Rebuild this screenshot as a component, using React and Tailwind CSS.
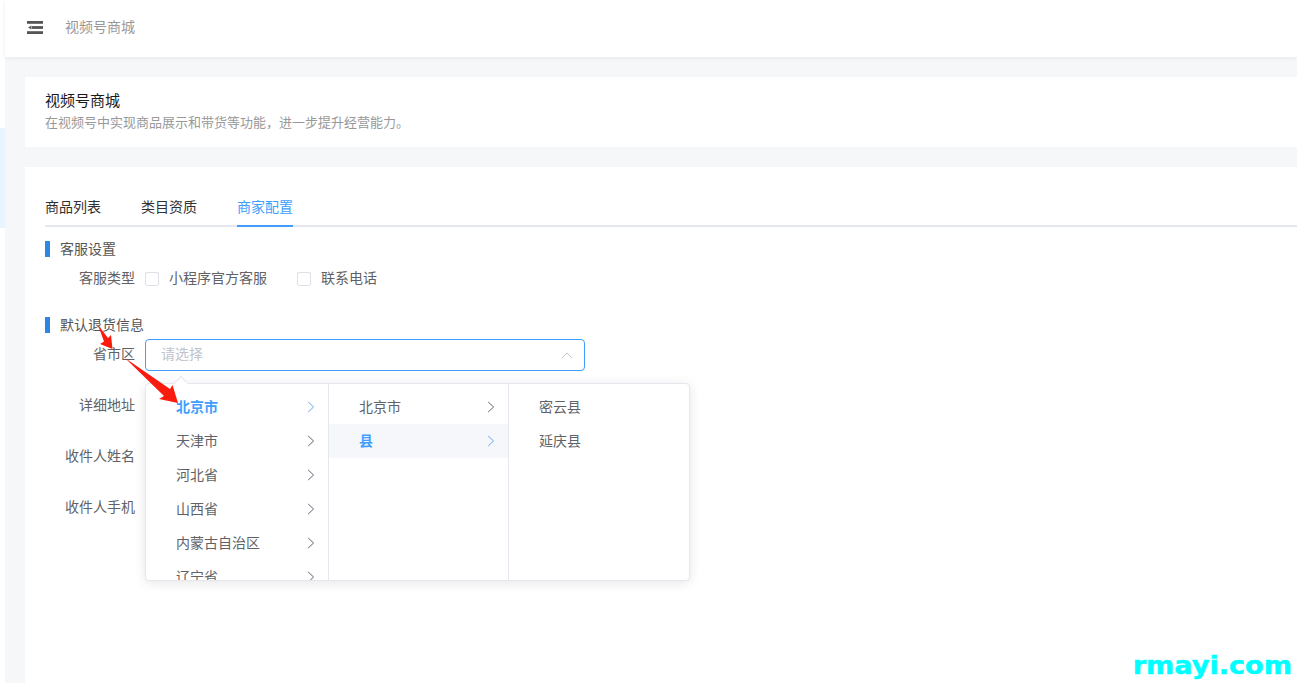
import React from 'react';

function Chevron({ className }) {
  return (
    <svg className={className} width="8" height="12" viewBox="0 0 8 12" fill="none" stroke="currentColor" strokeWidth="1">
      <path d="M1.2 1 L6.6 6 L1.2 11" />
    </svg>
  );
}

function Item({ label, active, hover, noChevron }) {
  return (
    <div className={`flex h-[34px] shrink-0 items-center justify-between pl-[30px] pr-[13px] text-[14px] ${hover ? 'bg-[#f5f7fa]' : ''} ${active ? 'font-bold text-[#409eff]' : 'text-[#606266]'}`}>
      <span className="pb-[2px]">{label}</span>
      {!noChevron && <Chevron className={active ? 'text-[#6ba6f2]' : 'text-[#5f6574]'} />}
    </div>
  );
}

function SectionTitle({ children, className }) {
  return (
    <div className={`flex h-4 items-center ${className}`}>
      <div className="h-4 w-[5px] bg-[#2b87e3]" />
      <span className="ml-[10px] pb-[2px] text-[14px] leading-4 text-[#555]">{children}</span>
    </div>
  );
}

function Label({ children, className = '' }) {
  return <div className={`w-[90px] text-right text-[14px] text-[#606266] ${className}`}>{children}</div>;
}

function Check({ label, className = '' }) {
  return (
    <div className={`flex items-center ${className}`}>
      <span className="h-[14px] w-[14px] rounded-[2px] border border-[#dcdfe6] bg-white" />
      <span className="ml-[10px] pb-[4px] text-[14px] text-[#606266]">{label}</span>
    </div>
  );
}

export default function App() {
  const col1 = ['北京市', '天津市', '河北省', '山西省', '内蒙古自治区', '辽宁省'];
  return (
    <div className="relative flex h-[683px] w-full overflow-hidden bg-white font-['Noto_Sans_CJK_SC','Microsoft_YaHei',sans-serif]">
      <aside className="flex w-[5px] shrink-0 flex-col bg-white pt-[128px]">
        <div className="h-[100px] bg-[#e8f4ff]" />
      </aside>

      <div className="flex min-w-0 flex-1 flex-col bg-[#f6f7f9]">
        <header className="z-10 flex h-[57px] shrink-0 items-center bg-white pb-[3px] pl-[22px] shadow-[0_1px_4px_rgba(0,21,41,0.08)]">
          <svg width="16" height="13" viewBox="0 0 16 13" fill="#555">
            <rect x="0" y="0" width="16" height="2.8" />
            <rect x="5" y="5.1" width="11" height="2.8" />
            <path d="M1 6.5 L4.5 4.4 V8.6 Z" />
            <rect x="0" y="10.2" width="16" height="2.8" />
          </svg>
          <span className="ml-[22px] pb-px text-[14px] text-[#999]">视频号商城</span>
        </header>

        <div className="flex min-h-0 flex-1 flex-col gap-5 pl-5 pt-5">
          <section className="flex h-[70px] shrink-0 flex-col bg-white pl-5 pt-[13px]">
            <div className="text-[15px] leading-5 text-[#1a1a1a]">视频号商城</div>
            <div className="mt-[2px] text-[13px] leading-5 text-[#999]">在视频号中实现商品展示和带货等功能，进一步提升经营能力。</div>
          </section>

          <section className="relative flex-1 bg-white pl-5">
            <nav className="mt-[20px] flex h-[40px] gap-10 border-b-2 border-[#e4e7ed]">
              <div className="h-[40px] pt-[9px] text-[14px] leading-5 text-[#303133]">商品列表</div>
              <div className="h-[40px] pt-[9px] text-[14px] leading-5 text-[#303133]">类目资质</div>
              <div className="h-[40px] border-b-2 border-[#409eff] pt-[9px] text-[14px] leading-5 text-[#409eff]">商家配置</div>
            </nav>

            <SectionTitle className="mt-[14px]">客服设置</SectionTitle>
            <div className="mt-[14px] flex h-[16px] items-center">
              <Label className="pb-[4px]">客服类型</Label>
              <Check label="小程序官方客服" className="ml-[10px]" />
              <Check label="联系电话" className="ml-[30px]" />
            </div>

            <SectionTitle className="mt-[30px]">默认退货信息</SectionTitle>
            <div className="mt-[6px] flex h-8 items-center">
              <Label className="pb-[4px]">省市区</Label>
              <div className="ml-[10px] flex h-8 w-[440px] items-center justify-between rounded-[4px] border border-[#409eff] pl-[15px] pr-[11px]">
                <span className="pb-[4px] text-[14px] text-[#c0c4cc]">请选择</span>
                <svg width="12" height="7" viewBox="0 0 12 7" fill="none" stroke="#c0c4cc" strokeWidth="1"><path d="M1 6 L6 1 L11 6" /></svg>
              </div>
            </div>
            <Label className="mt-[23px] leading-5">详细地址</Label>
            <Label className="mt-[31px] leading-5">收件人姓名</Label>
            <Label className="mt-[31px] leading-5">收件人手机</Label>

            {/* cascader popup */}
            <div className="absolute left-[120px] top-[216px] z-20 flex h-[198px] w-[545px] rounded-[4px] border border-[#e4e7ed] bg-white shadow-[0_2px_12px_rgba(0,0,0,0.1)]">
              <div className="absolute -top-[6px] left-[30px] h-[10px] w-[10px] rotate-45 border-l border-t border-[#e4e7ed] bg-white" />
              <div className="relative flex w-[183px] flex-col overflow-hidden border-r border-[#e4e7ed] pt-[6px]">
                {col1.map((c, i) => <Item key={c} label={c} active={i === 0} />)}
              </div>
              <div className="relative flex w-[180px] flex-col border-r border-[#e4e7ed] pt-[6px]">
                <Item label="北京市" />
                <Item label="县" active hover />
              </div>
              <div className="relative flex flex-1 flex-col pt-[6px]">
                <Item label="密云县" noChevron />
                <Item label="延庆县" noChevron />
              </div>
            </div>
          </section>
        </div>
      </div>

      {/* red annotation arrows */}
      <svg className="absolute left-0 top-0 z-30" width="300" height="430" viewBox="0 0 300 430" fill="#fb1a0e">
        <path d="M98 325 L108 338 L111 335 L112.5 349 L100 344 L104 341.5 Z" />
        <path d="M125 358 L170 389 L172.5 385 L178 403 L159 399 L164 396 Z" />
      </svg>

      {/* watermark */}
      <div className="absolute bottom-[5px] right-[5px] z-30 origin-right scale-x-[1.13] font-['DejaVu_Sans',sans-serif] text-[24px] font-bold leading-6 text-[#00ffff] [-webkit-text-stroke:0.5px_#00ffff]">rmayi.com</div>
    </div>
  );
}
